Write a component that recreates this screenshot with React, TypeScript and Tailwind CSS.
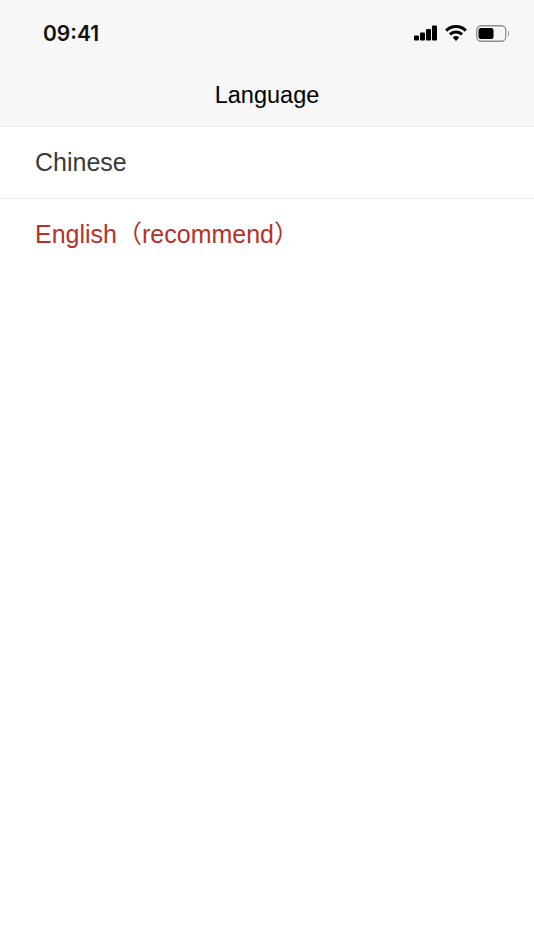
function StatusIcons() {
  return (
    <div className="flex items-center">
      <svg width="24" height="16" viewBox="0 0 24 16" className="mb-[1px]">
        <rect x="0" y="10.5" width="5" height="5" rx="1" fill="#000" />
        <rect x="6" y="7.5" width="5" height="8" rx="1" fill="#000" />
        <rect x="12" y="4" width="5" height="11.5" rx="1" fill="#000" />
        <rect x="18" y="0.5" width="5" height="15" rx="1" fill="#000" />
      </svg>
      <svg width="22" height="18" viewBox="0 0 22 18" className="ml-[7px] mb-[1px]">
        <path d="M1.2 6.6a14 14 0 0 1 19.6 0" fill="none" stroke="#000" strokeWidth="3" />
        <path d="M4.9 10.4a8.8 8.8 0 0 1 12.2 0" fill="none" stroke="#000" strokeWidth="3" />
        <path d="M7.8 13.4a4.6 4.6 0 0 1 6.4 0L11 17z" fill="#000" />
      </svg>
      <svg width="33" height="17" viewBox="0 0 33 17" className="ml-[9px]">
        <rect x="0.75" y="0.75" width="29" height="15.5" rx="4.5" fill="none" stroke="#8e8e8e" strokeWidth="1.3" />
        <rect x="2.5" y="3" width="15" height="11" rx="2.5" fill="#000" />
        <path d="M32 5.5c.7.6 1 1.6 1 3s-.3 2.4-1 3z" fill="#8e8e8e" />
      </svg>
    </div>
  );
}

export default function App() {
  return (
    <div className="min-h-[950px] bg-white font-['Liberation_Sans','Noto_Sans_CJK_SC',sans-serif]">
      <div className="bg-[#f7f7f7] border-b border-[#ececec]">
        <div className="flex h-[68px] items-center justify-between pl-[43px] pr-[25px] pb-[1px]">
          <span className="font-['Inter',sans-serif] text-[21px] font-semibold leading-none text-[#111]">09:41</span>
          <StatusIcons />
        </div>
        <div className="flex h-[58px] items-start justify-center pt-[12px]">
          <span className="text-[23.5px] leading-[30px] text-black">Language</span>
        </div>
      </div>

      <div className="flex h-[72px] items-center border-b border-[#ececec] pl-[35px] text-[25px] text-[#3a3a3a]">
        Chinese
      </div>
      <div className="flex h-[72px] items-center pl-[35px] text-[25px] text-[#b8302a]">
        English（recommend）
      </div>
    </div>
  );
}
